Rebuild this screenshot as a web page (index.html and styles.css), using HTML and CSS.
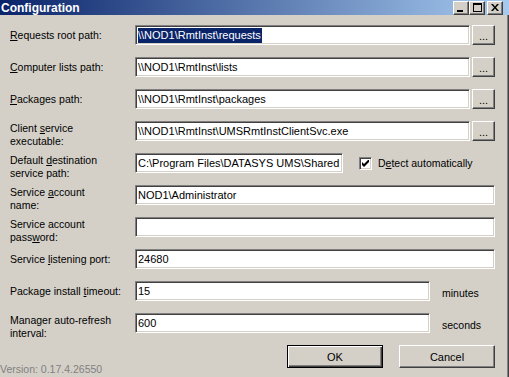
FILE: index.html
```html
<!DOCTYPE html>
<html lang="en">
<head>
  <meta charset="UTF-8">
  <title>Configuration</title>
  <link rel="stylesheet" href="styles.css">
</head>
<body>
  <div class="window">
    <div class="titlebar">
      <span class="title">Configuration</span>
      <div class="caption-buttons">
        <span class="caption-btn">
          <svg width="8" height="8" viewBox="0 0 8 8"><rect x="0" y="6" width="6" height="2" fill="#000"/></svg>
        </span>
        <span class="caption-btn">
          <svg width="9" height="9" viewBox="0 0 9 9"><path d="M0 0H9V9H0Z M1 2V8H8V2Z" fill="#000" fill-rule="evenodd"/></svg>
        </span>
        <span class="caption-btn close-btn">
          <svg width="8" height="7" viewBox="0 0 8 7"><path d="M0 0H2L4 2.5L6 0H8L5 3.5L8 7H6L4 4.5L2 7H0L3 3.5Z" fill="#000"/></svg>
        </span>
      </div>
    </div>

    <div class="client">
      <div class="form">
        <div class="row">
          <label class="label"><u>R</u>equests root path:</label>
          <div class="field"><span class="selected">\\NOD1\RmtInst\requests</span></div>
          <button class="button browse">...</button>
        </div>
        <div class="row">
          <label class="label"><u>C</u>omputer lists path:</label>
          <div class="field">\\NOD1\RmtInst\lists</div>
          <button class="button browse">...</button>
        </div>
        <div class="row">
          <label class="label"><u>P</u>ackages path:</label>
          <div class="field">\\NOD1\RmtInst\packages</div>
          <button class="button browse">...</button>
        </div>
        <div class="row">
          <label class="label multi">Client <u>s</u>ervice<br>executable:</label>
          <div class="field">\\NOD1\RmtInst\UMSRmtInstClientSvc.exe</div>
          <button class="button browse">...</button>
        </div>
        <div class="row">
          <label class="label multi">Default <u>d</u>estination<br>service path:</label>
          <div class="field field-dest">C:\Program Files\DATASYS UMS\Shared</div>
          <div class="check">
            <span class="checkbox">
              <svg width="7" height="7" viewBox="0 0 7 7"><path d="M0 2L2 4L7 -1V2L2 7L0 5Z" fill="#000"/></svg>
            </span>
            <span>D<u>e</u>tect automatically</span>
          </div>
        </div>
        <div class="row">
          <label class="label multi">Service <u>a</u>ccount<br>name:</label>
          <div class="field">NOD1\Administrator</div>
        </div>
        <div class="row">
          <label class="label multi">Service account<br>pass<u>w</u>ord:</label>
          <div class="field"></div>
        </div>
        <div class="row">
          <label class="label">Service <u>l</u>istening port:</label>
          <div class="field">24680</div>
        </div>
        <div class="row">
          <label class="label">Package install <u>t</u>imeout:</label>
          <div class="field field-short">15</div>
          <span class="unit">minutes</span>
        </div>
        <div class="row">
          <label class="label multi">Manager auto-refresh<br>interval:</label>
          <div class="field field-short">600</div>
          <span class="unit">seconds</span>
        </div>
      </div>

      <div class="footer">
        <span class="version">Version: 0.17.4.26550</span>
        <div class="actions">
          <button class="button default">OK</button>
          <button class="button">Cancel</button>
        </div>
      </div>
    </div>
  </div>
</body>
</html>
```

FILE: styles.css
```css
:root {
  --face: #d4d0c8;
  --shadow: #808080;
  --dark: #404040;
  --highlight: #ffffff;
  --select: #0a246a;
}

body {
  margin: 0;
  font-family: "Liberation Sans", Arial, sans-serif;
  font-size: 11px;
  color: #000;
}

.window {
  width: 509px;
  height: 377px;
  background: var(--face);
  overflow: hidden;
}

.titlebar {
  height: 15px;
  display: flex;
  align-items: center;
  justify-content: space-between;
  padding: 0 6px 0 1px;
  background: linear-gradient(to right, #0a246a, #a6caf0);
}

.title {
  color: #fff;
  font-weight: bold;
  font-size: 12px;
}

.caption-buttons {
  display: flex;
  align-items: center;
}

.caption-btn {
  width: 16px;
  height: 14px;
  box-sizing: border-box;
  background: var(--face);
  border: 1px solid;
  border-color: var(--highlight) var(--dark) var(--dark) var(--highlight);
  box-shadow: inset -1px -1px var(--shadow);
  display: flex;
  align-items: center;
  justify-content: center;
}

.close-btn {
  margin-left: 2px;
}

.client {
  height: 362px;
  box-sizing: border-box;
  padding: 10px 14px 0 0;
  box-shadow: inset -1px 0 var(--dark), inset -2px 0 var(--shadow);
}

.form {
  display: flex;
  flex-direction: column;
  gap: 12px;
  padding-left: 10px;
}

.row {
  display: flex;
  align-items: flex-start;
  height: 20px;
}

.label {
  width: 125px;
  flex-shrink: 0;
  font-size: 10.5px;
  line-height: 13px;
  padding-top: 4px;
}

.label.multi {
  padding-top: 1px;
}

.field {
  flex: 1;
  height: 20px;
  box-sizing: border-box;
  background: #fff;
  border: 1px solid;
  border-color: var(--shadow) var(--highlight) var(--highlight) var(--shadow);
  box-shadow: inset 1px 1px var(--dark), inset -1px -1px var(--face);
  padding: 0 2px;
  line-height: 18px;
  white-space: nowrap;
  overflow: hidden;
}

.field-dest {
  flex: 0 0 208px;
}

.field-short {
  flex: 0 0 295px;
}

.selected {
  background: var(--select);
  color: #fff;
  padding: 1px 1px 2px 0;
}

.button {
  font-family: inherit;
  font-size: 11px;
  color: #000;
  background: var(--face);
  border: 1px solid;
  border-color: var(--highlight) var(--dark) var(--dark) var(--highlight);
  box-shadow: inset -1px -1px var(--shadow);
  padding: 0;
  width: 96px;
  height: 23px;
}

.button.default {
  border-color: #000;
  box-shadow: inset 1px 1px var(--highlight), inset -1px -1px var(--dark), inset -2px -2px var(--shadow);
}

.browse {
  width: 23px;
  height: 20px;
  margin-left: 2px;
  padding-top: 2px;
}

.check {
  display: flex;
  align-items: center;
  gap: 6px;
  margin-left: 16px;
  height: 20px;
  font-size: 10.5px;
}

.checkbox {
  width: 13px;
  height: 13px;
  box-sizing: border-box;
  background: #fff;
  border: 1px solid;
  border-color: var(--shadow) var(--highlight) var(--highlight) var(--shadow);
  box-shadow: inset 1px 1px var(--dark), inset -1px -1px var(--face);
  display: flex;
  align-items: center;
  justify-content: center;
}

.unit {
  margin-left: 12px;
  font-size: 10.5px;
  line-height: 13px;
  padding-top: 6px;
}

.footer {
  display: flex;
  align-items: flex-start;
  margin-top: 12px;
}

.version {
  color: var(--shadow);
  font-size: 10.5px;
  margin-top: 18px;
  line-height: 13px;
}

.actions {
  margin-left: auto;
  display: flex;
  gap: 16px;
}
```
